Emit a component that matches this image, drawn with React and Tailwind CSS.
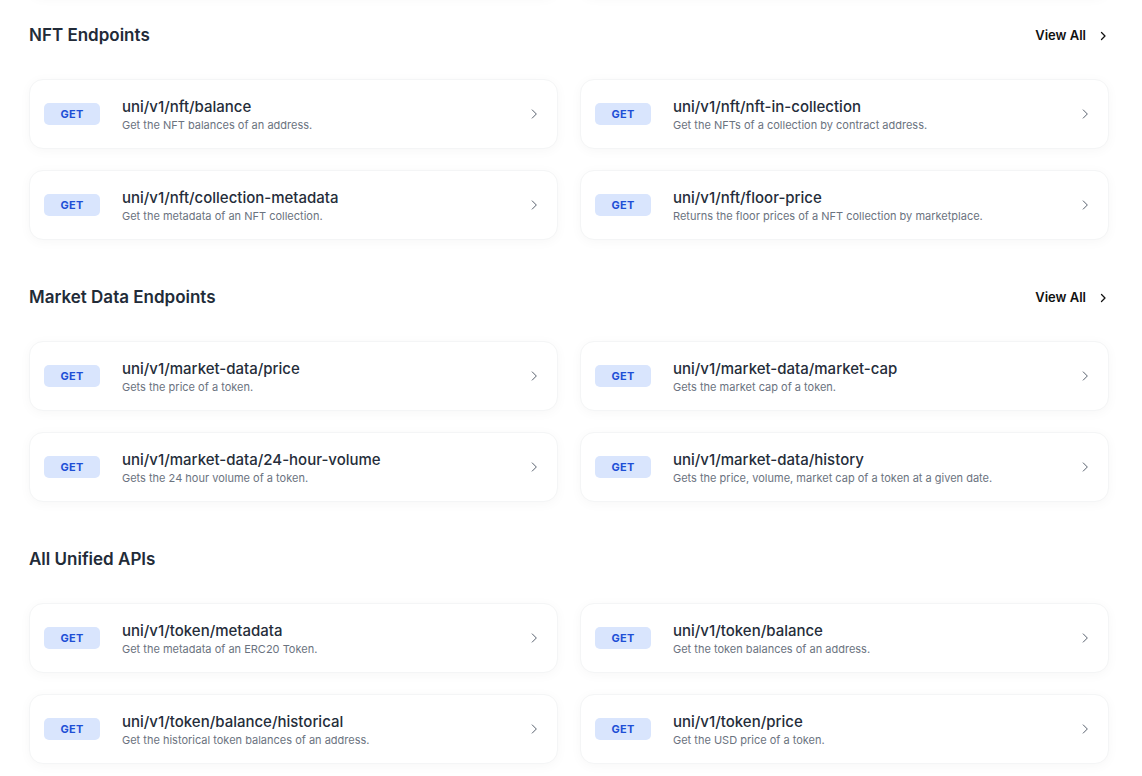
import React from "react";

const sections = [
  {
    title: "NFT Endpoints",
    viewAll: true,
    items: [
      ["uni/v1/nft/balance", "Get the NFT balances of an address."],
      ["uni/v1/nft/nft-in-collection", "Get the NFTs of a collection by contract address."],
      ["uni/v1/nft/collection-metadata", "Get the metadata of an NFT collection."],
      ["uni/v1/nft/floor-price", "Returns the floor prices of a NFT collection by marketplace."],
    ],
  },
  {
    title: "Market Data Endpoints",
    viewAll: true,
    items: [
      ["uni/v1/market-data/price", "Gets the price of a token."],
      ["uni/v1/market-data/market-cap", "Gets the market cap of a token."],
      ["uni/v1/market-data/24-hour-volume", "Gets the 24 hour volume of a token."],
      ["uni/v1/market-data/history", "Gets the price, volume, market cap of a token at a given date."],
    ],
  },
  {
    title: "All Unified APIs",
    viewAll: false,
    items: [
      ["uni/v1/token/metadata", "Get the metadata of an ERC20 Token."],
      ["uni/v1/token/balance", "Get the token balances of an address."],
      ["uni/v1/token/balance/historical", "Get the historical token balances of an address."],
      ["uni/v1/token/price", "Get the USD price of a token."],
    ],
  },
];

function Chevron({ className, strokeWidth = 1.6 }) {
  return (
    <svg viewBox="0 0 24 24" className={className} fill="none" stroke="currentColor" strokeWidth={strokeWidth} strokeLinecap="round" strokeLinejoin="round">
      <path d="M9 5l7 7-7 7" />
    </svg>
  );
}

function Card({ path, desc }) {
  return (
    <div className="h-[70px] bg-white rounded-[14px] border border-[#f4f5f6] shadow-[0_2px_12px_rgba(0,0,0,0.035)] flex items-center pl-[14px] pr-[16px]">
      <div className="w-[56px] h-[22px] rounded-[5px] bg-[#d9e5fd] text-[#1e4fd6] text-[11px] font-bold flex items-center justify-center tracking-[0.02em]">
        GET
      </div>
      <div className="ml-[22px] flex-1 flex flex-col pt-[2px]">
        <div className="text-[15px] leading-[19px] font-medium text-[#252d3a]">{path}</div>
        <div className="text-[11px] leading-[16px] text-[#6b7380] mt-[1px]">{desc}</div>
      </div>
      <Chevron className="w-[14px] h-[14px] text-[#4b5563]" />
    </div>
  );
}

export default function App() {
  return (
    <div className="w-[1142px] h-[776px] overflow-hidden bg-white" style={{ fontFamily: "Inter, 'Noto Sans', sans-serif" }}>
      <div className="pl-[29px] pr-[33px]">
        <div className="grid grid-cols-2 gap-x-[22px] -mt-[73px]">
          <div className="h-[70px] bg-white rounded-[14px] shadow-[0_2px_12px_rgba(0,0,0,0.03)]" />
          <div className="h-[70px] bg-white rounded-[14px] shadow-[0_2px_12px_rgba(0,0,0,0.03)]" />
        </div>
        {sections.map((s, i) => (
          <div key={s.title} className={i === 0 ? "mt-[27px]" : "mt-[46px]"}>
            <div className="flex items-center justify-between h-[24px]">
              <h2 className="text-[17px] font-semibold text-[#222b38]">{s.title}</h2>
              {s.viewAll && (
                <div className="flex items-center text-[13px] font-semibold text-[#111]">
                  View All
                  <Chevron className="w-[12px] h-[12px] ml-[11px]" strokeWidth={2.6} />
                </div>
              )}
            </div>
            <div className="mt-[31px] grid grid-cols-2 gap-x-[22px] gap-y-[21px]">
              {s.items.map(([p, d]) => (
                <Card key={p} path={p} desc={d} />
              ))}
            </div>
          </div>
        ))}
      </div>
    </div>
  );
}
